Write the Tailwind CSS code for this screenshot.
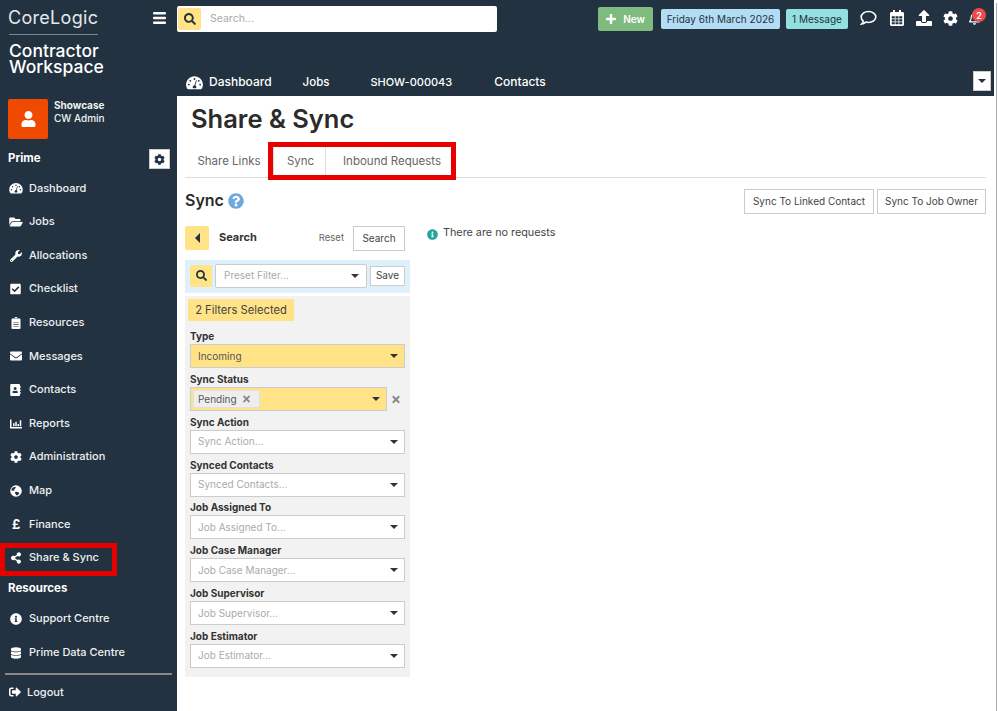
<!DOCTYPE html>
<html lang="en">
<head>
<meta charset="utf-8">
<title>Share &amp; Sync</title>
<script src="https://cdn.jsdelivr.net/npm/@tailwindcss/browser@4"></script>
</head>
<body class="m-0 bg-white font-['Inter','Liberation_Sans',sans-serif] text-[#333]">
<svg class="hidden" xmlns="http://www.w3.org/2000/svg">
<symbol id="search" viewBox="0 0 512 512"><path d="M505 442.7L405.3 343c-4.5-4.5-10.6-7-17-7H372c27.6-35.3 44-79.7 44-128C416 93.1 322.9 0 208 0S0 93.1 0 208s93.1 208 208 208c48.3 0 92.7-16.4 128-44v16.3c0 6.4 2.5 12.5 7 17l99.7 99.7c9.4 9.4 24.6 9.4 33.9 0l28.3-28.3c9.4-9.4 9.4-24.6.1-34zM208 336c-70.7 0-128-57.2-128-128 0-70.7 57.2-128 128-128 70.7 0 128 57.2 128 128 0 70.7-57.2 128-128 128z"/></symbol>
<symbol id="user" viewBox="0 0 448 512"><path d="M224 256c70.7 0 128-57.3 128-128S294.7 0 224 0 96 57.3 96 128s57.3 128 128 128zm89.6 32h-16.7c-22.2 10.2-46.9 16-72.9 16s-50.6-5.8-72.9-16h-16.7C60.2 288 0 348.2 0 422.4V464c0 26.5 21.5 48 48 48h352c26.5 0 48-21.5 48-48v-41.6c0-74.2-60.2-134.4-134.4-134.4z"/></symbol>
<symbol id="cog" viewBox="0 0 512 512"><path d="M487.4 315.7l-42.6-24.6c4.3-23.2 4.3-47 0-70.2l42.6-24.6c4.9-2.8 7.1-8.6 5.5-14-11.1-35.6-30-67.8-54.7-94.6-3.8-4.1-10-5.1-14.8-2.3L380.8 110c-17.9-15.4-38.5-27.3-60.8-35.1V25.8c0-5.6-3.9-10.5-9.4-11.7-36.7-8.2-74.3-7.8-109.2 0-5.5 1.2-9.4 6.1-9.4 11.7V75c-22.2 7.9-42.8 19.8-60.8 35.1L88.7 85.5c-4.9-2.8-11-1.9-14.8 2.3-24.7 26.7-43.6 58.9-54.7 94.6-1.7 5.4.6 11.2 5.5 14L67.3 221c-4.3 23.2-4.3 47 0 70.2l-42.6 24.6c-4.9 2.8-7.1 8.6-5.5 14 11.1 35.6 30 67.8 54.7 94.6 3.8 4.1 10 5.1 14.8 2.3l42.6-24.6c17.9 15.4 38.5 27.3 60.8 35.1v49.2c0 5.6 3.9 10.5 9.4 11.7 36.7 8.2 74.3 7.8 109.2 0 5.5-1.2 9.4-6.1 9.4-11.7v-49.2c22.2-7.9 42.8-19.8 60.8-35.1l42.6 24.6c4.9 2.8 11 1.9 14.8-2.3 24.7-26.7 43.6-58.9 54.7-94.6 1.5-5.5-.7-11.3-5.6-14.1zM256 336c-44.1 0-80-35.9-80-80s35.9-80 80-80 80 35.9 80 80-35.9 80-80 80z"/></symbol>
<symbol id="wrench" viewBox="0 0 512 512"><path d="M507.73 109.1c-2.24-9.03-13.54-12.09-20.12-5.51l-74.36 74.36-67.88-11.31-11.31-67.88 74.36-74.36c6.62-6.62 3.43-17.9-5.66-20.16-47.38-11.74-99.55.91-136.58 37.93-39.64 39.64-50.55 97.1-34.05 147.2L18.74 402.76c-24.99 24.99-24.99 65.51 0 90.5 24.99 24.99 65.51 24.99 90.5 0l213.21-213.21c50.12 16.71 107.47 5.68 147.37-34.22 37.07-37.07 49.7-89.32 37.91-136.73zM64 472c-13.25 0-24-10.75-24-24 0-13.26 10.75-24 24-24s24 10.74 24 24c0 13.25-10.75 24-24 24z"/></symbol>
<symbol id="check" viewBox="0 0 448 512"><path d="M400 480H48c-26.51 0-48-21.49-48-48V80c0-26.51 21.49-48 48-48h352c26.51 0 48 21.49 48 48v352c0 26.51-21.49 48-48 48zm-204.686-98.059l184-184c6.248-6.248 6.248-16.379 0-22.627l-22.627-22.627c-6.248-6.248-16.379-6.249-22.628 0L184 302.745l-70.059-70.059c-6.248-6.248-16.379-6.248-22.628 0l-22.627 22.627c-6.248 6.248-6.248 16.379 0 22.627l104 104c6.249 6.25 16.379 6.25 22.628.001z"/></symbol>
<symbol id="envelope" viewBox="0 0 512 512"><path d="M502.3 190.8c3.9-3.1 9.7-.2 9.7 4.7V400c0 26.5-21.5 48-48 48H48c-26.5 0-48-21.5-48-48V195.6c0-5 5.7-7.8 9.7-4.7 22.4 17.4 52.1 39.5 154.1 113.6 21.1 15.4 56.7 47.8 92.2 47.6 35.7.3 72-32.8 92.3-47.6 102-74.1 131.6-96.3 154-113.7zM256 320c23.2.4 56.6-29.2 73.4-41.4 132.7-96.3 142.8-104.7 173.4-128.7 5.8-4.5 9.2-11.5 9.2-18.9v-19c0-26.5-21.5-48-48-48H48C21.5 64 0 85.5 0 112v19c0 7.4 3.4 14.3 9.2 18.9 30.6 23.9 40.7 32.4 173.4 128.7 16.8 12.2 50.2 41.8 73.4 41.4z"/></symbol>
<symbol id="info" viewBox="0 0 512 512"><path d="M256 8C119.043 8 8 119.083 8 256c0 136.997 111.043 248 248 248s248-111.003 248-248C504 119.083 392.957 8 256 8zm0 110c23.196 0 42 18.804 42 42s-18.804 42-42 42-42-18.804-42-42 18.804-42 42-42zm56 254c0 6.627-5.373 12-12 12h-88c-6.627 0-12-5.373-12-12v-24c0-6.627 5.373-12 12-12h12v-64h-12c-6.627 0-12-5.373-12-12v-24c0-6.627 5.373-12 12-12h64c6.627 0 12 5.373 12 12v100h12c6.627 0 12 5.373 12 12v24z"/></symbol>
<symbol id="share" viewBox="0 0 448 512"><path d="M352 320c-22.608 0-43.387 7.819-59.79 20.895l-102.486-64.054a96.551 96.551 0 0 0 0-41.683l102.486-64.054C308.613 184.181 329.392 192 352 192c53.019 0 96-42.981 96-96S405.019 0 352 0s-96 42.981-96 96c0 7.158.79 14.13 2.276 20.841L155.79 180.895C139.387 167.819 118.608 160 96 160c-53.019 0-96 42.981-96 96s42.981 96 96 96c22.608 0 43.387-7.819 59.79-20.895l102.486 64.054A96.301 96.301 0 0 0 256 416c0 53.019 42.981 96 96 96s96-42.981 96-96-42.981-96-96-96z"/></symbol>
<symbol id="gauge" viewBox="0 0 576 512"><path fill-rule="evenodd" d="M288 40C129 40 0 169 0 328c0 53 14 102 39 145 6 10 17 15 28 15h442c11 0 22-5 28-15 25-43 39-92 39-145C576 169 447 40 288 40zM288 104a32 32 0 1 1 0 64 32 32 0 0 1 0-64zM96 360a32 32 0 1 1 0-64 32 32 0 0 1 0 64zM144 232a32 32 0 1 1 0-64 32 32 0 0 1 0 64zM480 360a32 32 0 1 1 0-64 32 32 0 0 1 0 64zM432 232a32 32 0 1 1 0-64 32 32 0 0 1 0 64zM362 206l-46 146c20 12 34 33 34 58 0 16-6 31-15 42h-94c-9-11-15-26-15-42 0-35 28-63 63-64l45-152c3-10 13-15 22-12s9 14 6 24z"/></symbol>
<symbol id="folder" viewBox="0 0 576 512"><path d="M572.700 292.100L500.300 416.200A64 64 0 0 1 445 448H45c-18.500 0-30.100-20.100-20.700-36.100l72.400-124.200A64 64 0 0 1 152 256h400c18.500 0 30.100 20.100 20.700 36.100zM152 224h328v-48c0-26.500-21.500-48-48-48H272l-64-64H48C21.500 64 0 85.500 0 112v278l69.100-118.400C86.200 242.300 118 224 152 224z"/></symbol>
<symbol id="clipboard" viewBox="0 0 384 512"><path fill-rule="evenodd" d="M336 64h-80c0-35.300-28.700-64-64-64s-64 28.700-64 64H48C21.500 64 0 85.500 0 112v352c0 26.500 21.500 48 48 48h288c26.500 0 48-21.500 48-48V112c0-26.500-21.500-48-48-48zM192 40a24 24 0 1 1 0 48 24 24 0 0 1 0-48zM80 220h224v28H80zM80 300h224v28H80zM80 380h224v28H80z"/></symbol>
<symbol id="book" viewBox="0 0 448 512"><path fill-rule="evenodd" d="M436 160c6.600 0 12-5.400 12-12v-40c0-6.600-5.400-12-12-12h-20V48c0-26.500-21.500-48-48-48H48C21.500 0 0 21.500 0 48v416c0 26.500 21.500 48 48 48h320c26.500 0 48-21.500 48-48v-48h20c6.600 0 12-5.400 12-12v-40c0-6.600-5.400-12-12-12h-20v-64h20c6.600 0 12-5.400 12-12v-40c0-6.600-5.400-12-12-12h-20v-64h20zM208 128a64 64 0 1 1 0 128 64 64 0 0 1 0-128zm112 236.800c0 10.600-10 19.200-22.400 19.200H118.400C106 384 96 375.400 96 364.800v-19.200c0-31.800 30.100-57.600 67.200-57.600h5c12.300 5.100 25.700 8 39.800 8s27.600-2.900 39.800-8h5c37.100 0 67.200 25.800 67.200 57.600v19.200z"/></symbol>
<symbol id="chart" viewBox="0 0 512 512"><path d="M496 384H64V80c0-8.840-7.160-16-16-16H16C7.160 64 0 71.160 0 80v336c0 17.670 14.330 32 32 32h464c8.840 0 16-7.160 16-16v-32c0-8.840-7.160-16-16-16zM144 352h32c8.800 0 16-7.200 16-16v-96c0-8.800-7.200-16-16-16h-32c-8.800 0-16 7.200-16 16v96c0 8.800 7.200 16 16 16zm96 0h32c8.800 0 16-7.200 16-16V176c0-8.800-7.200-16-16-16h-32c-8.800 0-16 7.200-16 16v160c0 8.800 7.200 16 16 16zm96 0h32c8.800 0 16-7.200 16-16v-64c0-8.800-7.200-16-16-16h-32c-8.800 0-16 7.200-16 16v64c0 8.800 7.200 16 16 16zm96 0h32c8.800 0 16-7.200 16-16V112c0-8.800-7.200-16-16-16h-32c-8.800 0-16 7.200-16 16v224c0 8.800 7.200 16 16 16z"/></symbol>
<symbol id="globe" viewBox="0 0 512 512"><path fill-rule="evenodd" d="M256 8a248 248 0 1 0 0 496 248 248 0 0 0 0-496zM120 110c40-10 70-30 110-20 30 8 20 50-10 60-30 12-40 30-30 60 8 26-30 40-60 30-30-10-60-10-70 0 0-50 20-100 60-130zM300 440c-30 10-50-10-50-40 0-30-40-30-40-70 0-30 40-50 80-40 40 10 80 20 100 50 14 30-40 90-90 100z"/></symbol>
<symbol id="db" viewBox="0 0 448 512"><path d="M448 73.100v45.700C448 159.100 347.700 192 224 192S0 159.100 0 118.900V73.100C0 32.900 100.300 0 224 0s224 32.900 224 73.100zM448 176v102.900C448 319.100 347.700 352 224 352S0 319.100 0 278.900V176c48.100 33.100 136.200 48.600 224 48.600S399.900 209.100 448 176zm0 160v102.900C448 479.100 347.700 512 224 512S0 479.100 0 438.900V336c48.100 33.100 136.200 48.600 224 48.600S399.900 369.100 448 336z"/></symbol>
<symbol id="signout" viewBox="0 0 512 512"><path d="M497 273L329 441c-15 15-41 4.500-41-17v-96H152c-13.300 0-24-10.700-24-24v-96c0-13.300 10.700-24 24-24h136V88c0-21.400 25.900-32 41-17l168 168c9.300 9.400 9.300 24.600 0 34zM192 436v-40c0-6.600-5.400-12-12-12H96c-17.700 0-32-14.300-32-32V160c0-17.700 14.300-32 32-32h84c6.600 0 12-5.400 12-12V76c0-6.600-5.400-12-12-12H96c-53 0-96 43-96 96v192c0 53 43 96 96 96h84c6.600 0 12-5.400 12-12z"/></symbol>
<symbol id="calendar" viewBox="0 0 448 512"><path fill-rule="evenodd" d="M400 64h-48V12c0-6.600-5.400-12-12-12h-40c-6.600 0-12 5.400-12 12v52H160V12c0-6.600-5.400-12-12-12h-40c-6.600 0-12 5.400-12 12v52H48C21.500 64 0 85.500 0 112v352c0 26.500 21.500 48 48 48h352c26.500 0 48-21.500 48-48V112c0-26.500-21.500-48-48-48zM56 200h96v72H56zM176 200h96v72h-96zM296 200h96v72h-96zM56 296h96v72H56zM176 296h96v72h-96zM296 296h96v72h-96zM56 392h96v64H56zM176 392h96v64h-96zM296 392h96v64h-96z"/></symbol>
<symbol id="upload" viewBox="0 0 512 512"><path d="M296 384h-80c-13.300 0-24-10.700-24-24V192h-87.700c-17.800 0-26.700-21.500-14.100-34.100L242.300 5.700c7.500-7.500 19.800-7.500 27.300 0l152.200 152.200c12.600 12.600 3.700 34.100-14.100 34.100H320v168c0 13.300-10.700 24-24 24zm216-8v112c0 13.300-10.700 24-24 24H24c-13.300 0-24-10.700-24-24V376c0-13.300 10.700-24 24-24h136v8c0 30.900 25.100 56 56 56h80c30.900 0 56-25.100 56-56v-8h136c13.300 0 24 10.700 24 24z"/></symbol>
<symbol id="bell" viewBox="0 0 448 512"><path fill-rule="evenodd" d="M224 512c35.300 0 64-28.700 64-64H160c0 35.300 28.700 64 64 64zM439.400 362.300c-19.300-20.800-55.500-52-55.500-154.300 0-77.700-54.500-139.900-127.900-155.200V32c0-17.700-14.300-32-32-32s-32 14.300-32 32v20.800C118.600 68.100 64.100 130.300 64.100 208c0 102.300-36.200 133.500-55.500 154.300-6 6.400-8.700 14.100-8.600 21.700.1 16.400 13 32 32.100 32h383.800c19.100 0 32-15.600 32.100-32 .1-7.600-2.600-15.300-8.600-21.700zM64 368c21-27 48-70 48-160 0-62 50-112 112-112s112 50 112 112c0 90 27 133 48 160z"/></symbol>
<symbol id="question" viewBox="0 0 512 512"><path d="M504 256c0 137-111 248-248 248S8 393 8 256C8 119.100 119 8 256 8s248 111 248 248zM262.700 90c-54.500 0-89.300 23-116.600 63.800-3.500 5.300-2.400 12.400 2.700 16.300l34.700 26.300c5.200 3.900 12.600 3 16.700-2.100 17.900-22.700 30.100-35.800 57.300-35.800 20.400 0 45.700 13.100 45.700 33 0 15-12.400 22.700-32.600 34-23.600 13.200-54.800 29.700-54.800 70.900V300c0 6.600 5.400 12 12 12h56c6.600 0 12-5.400 12-12v-1.300c0-28.600 83.400-29.800 83.400-107.200C379.200 133.300 318.800 90 262.700 90zM256 339c-25.400 0-46 20.600-46 46 0 25.400 20.600 46 46 46s46-20.600 46-46c0-25.400-20.600-46-46-46z"/></symbol>
<symbol id="times" viewBox="0 0 352 512"><path d="M242.720 256l100.070-100.070c12.280-12.280 12.280-32.190 0-44.480l-22.240-22.240c-12.280-12.280-32.190-12.280-44.480 0L176 189.280 75.930 89.210c-12.280-12.280-32.190-12.280-44.480 0L9.210 111.450c-12.280 12.280-12.280 32.190 0 44.480L109.280 256 9.210 356.070c-12.280 12.280-12.280 32.190 0 44.480l22.240 22.240c12.280 12.280 32.200 12.280 44.480 0L176 322.720l100.070 100.070c12.280 12.280 32.200 12.280 44.480 0l22.240-22.240c12.280-12.280 12.280-32.190 0-44.480L242.720 256z"/></symbol>
</svg>

<div class="relative flex h-[711px] w-[998px] overflow-hidden">
  <!-- sidebar -->
  <aside class="flex h-full w-[177px] shrink-0 flex-col bg-[#223240] text-white">
    <div class="flex h-[99px] justify-between pl-[8px] pr-[11px]">
      <div class="w-[100px]">
        <div class="mt-[8px] h-[20px] whitespace-nowrap text-[18px] leading-[20px] tracking-[0.3px] text-[#e6e9eb]">CoreLogic</div>
        <div class="ml-[1px] mt-[6px] h-[1px] w-[89px] bg-[#7b8790]"></div>
        <div class="ml-[1px] mt-[8px] whitespace-nowrap text-[17.500px] font-medium leading-[16px]">Contractor<br>Workspace</div>
      </div>
      <svg class="mt-[12px] h-[12px] w-[13px]" viewBox="0 0 13 12" fill="#fff"><rect width="13" height="2.500" y="0" rx="1"/><rect width="13" height="2.500" y="4.700" rx="1"/><rect width="13" height="2.500" y="9.400" rx="1"/></svg>
    </div>
    <div class="flex h-[40px] items-stretch pl-[8px]">
      <div class="flex h-[40px] w-[40px] items-center justify-center rounded-[2px] bg-[#f04a00]">
        <svg class="h-[16px] w-[15px]" fill="#fff"><use href="#user"/></svg>
      </div>
      <div class="ml-[6px] text-[10px] leading-[13px] text-[#f0f2f3]">
        <div class="font-bold">Showcase</div>
        <div class="font-medium">CW Admin</div>
      </div>
    </div>
    <div class="mt-[10px] flex h-[20px] items-center justify-between pl-[8px] pr-[7px]">
      <span class="text-[11.500px] font-bold">Prime</span>
      <span class="flex h-[20px] w-[21px] items-center justify-center border border-[#ccc] bg-white"><svg class="h-[11px] w-[11px]" fill="#223240"><use href="#cog"/></svg></span>
    </div>
    <nav class="mt-[2.600px] flex flex-col text-[11px] font-medium text-[#eef0f2]">
      <a class="flex h-[33.600px] items-center pl-[9px]"><svg class="h-[12px] w-[14px]" fill="#fff"><use href="#gauge"/></svg><span class="ml-[6px] -mt-[1px]">Dashboard</span></a>
      <a class="flex h-[33.600px] items-center pl-[9px]"><svg class="h-[12px] w-[14px]" fill="#fff"><use href="#folder"/></svg><span class="ml-[6px] -mt-[1px]">Jobs</span></a>
      <a class="flex h-[33.600px] items-center pl-[10px]"><svg class="h-[12px] w-[12px]" fill="#fff"><use href="#wrench"/></svg><span class="ml-[7px] -mt-[1px]">Allocations</span></a>
      <a class="flex h-[33.600px] items-center pl-[10px]"><svg class="h-[12px] w-[11px]" fill="#fff"><use href="#check"/></svg><span class="ml-[8px] -mt-[1px]">Checklist</span></a>
      <a class="flex h-[33.600px] items-center pl-[11px]"><svg class="h-[12px] w-[10px]" fill="#fff"><use href="#clipboard"/></svg><span class="ml-[8px] -mt-[1px]">Resources</span></a>
      <a class="flex h-[33.600px] items-center pl-[10px]"><svg class="h-[12px] w-[12px]" fill="#fff"><use href="#envelope"/></svg><span class="ml-[7px] -mt-[1px]">Messages</span></a>
      <a class="flex h-[33.600px] items-center pl-[10px]"><svg class="h-[12px] w-[11px]" fill="#fff"><use href="#book"/></svg><span class="ml-[8px] -mt-[1px]">Contacts</span></a>
      <a class="flex h-[33.600px] items-center pl-[10px]"><svg class="h-[12px] w-[12px]" fill="#fff"><use href="#chart"/></svg><span class="ml-[7px] -mt-[1px]">Reports</span></a>
      <a class="flex h-[33.600px] items-center pl-[10px]"><svg class="h-[12px] w-[12px]" fill="#fff"><use href="#cog"/></svg><span class="ml-[7px] -mt-[1px]">Administration</span></a>
      <a class="flex h-[33.600px] items-center pl-[10px]"><svg class="h-[12px] w-[12px]" fill="#fff"><use href="#globe"/></svg><span class="ml-[7px] -mt-[1px]">Map</span></a>
      <a class="flex h-[33.600px] items-center pl-[12px]"><span class="w-[9px] text-[13px] font-bold leading-none text-white">£</span><span class="ml-[8px] -mt-[1px]">Finance</span></a>
      <a class="flex h-[33.600px] items-center pl-[11px]"><svg class="h-[12px] w-[10px]" fill="#fff"><use href="#share"/></svg><span class="ml-[8px] -mt-[1px]">Share &amp; Sync</span></a>
      <div class="flex h-[27.500px] items-center pl-[8px] text-[11.500px] font-bold text-white">Resources</div>
      <a class="flex h-[33.600px] items-center pl-[10px]"><svg class="h-[12px] w-[12px]" fill="#fff"><use href="#info"/></svg><span class="ml-[7px] -mt-[1px]">Support Centre</span></a>
      <a class="flex h-[33.600px] items-center pl-[11px]"><svg class="h-[12px] w-[10px]" fill="#fff"><use href="#db"/></svg><span class="ml-[8px] -mt-[1px]">Prime Data Centre</span></a>
    </nav>
    <div class="ml-[5px] mt-[4px] h-[2px] w-[167px] bg-[#888]"></div>
    <a class="mt-[5px] flex h-[24px] items-center pl-[9px] text-[11px] font-medium text-[#eef0f2]"><svg class="h-[12px] w-[12px]" fill="#fff"><use href="#signout"/></svg><span class="ml-[6px] -mt-[1px]">Logout</span></a>
  </aside>

  <!-- main -->
  <div class="flex min-w-0 flex-1 flex-col">
    <header class="flex h-[96px] shrink-0 flex-col bg-[#223240] text-white">
      <div class="flex h-[40px] items-start">
        <div class="mt-[6px] flex h-[26px] w-[320px] items-center rounded-[2px] bg-white pl-[1px]">
          <span class="flex h-[22px] w-[23px] items-center justify-center rounded-[2px] bg-[#ffe386]"><svg class="h-[12px] w-[12px]" fill="#223240"><use href="#search"/></svg></span>
          <span class="ml-[9px] text-[10.500px] text-[#aaa]">Search...</span>
        </div>
        <button class="ml-[101px] mt-[7px] flex h-[24px] w-[55px] items-center justify-center gap-[7px] rounded-[2px] bg-[#7fbb7f] text-[10px] font-semibold text-white">
          <svg class="h-[10px] w-[10px]" viewBox="0 0 10 10" fill="#fff"><rect x="3.800" width="2.400" height="10" rx=".6"/><rect y="3.800" width="10" height="2.400" rx=".6"/></svg>New
        </button>
        <span class="ml-[8px] mt-[9px] flex h-[20px] w-[119px] items-center justify-center rounded-[2px] bg-[#b3dcf5] text-[10px] text-[#223240]">Friday 6th March 2026</span>
        <span class="ml-[6px] mt-[9px] flex h-[20px] w-[62px] items-center justify-center rounded-[2px] bg-[#94e0e0] text-[10px] text-[#223240]">1 Message</span>
        <svg class="ml-[12px] mt-[10px] h-[16px] w-[17px]" viewBox="0 0 17 16" fill="none" stroke="#fff" stroke-width="1.600"><path d="M8.500 1.500c4 0 7.300 2.400 7.300 5.500s-3.300 5.500-7.300 5.500c-1 0-1.900-.1-2.800-.4-1 .9-2.400 1.700-4 1.900.8-.8 1.400-1.900 1.500-3C1.900 10.300 1.200 8.700 1.200 7c0-3.100 3.300-5.500 7.300-5.500z"/></svg>
        <svg class="ml-[13px] mt-[10px] h-[16px] w-[14px]" fill="#fff"><use href="#calendar"/></svg>
        <svg class="ml-[12px] mt-[10px] h-[16px] w-[16px]" fill="#fff"><use href="#upload"/></svg>
        <svg class="ml-[11px] mt-[11px] h-[15px] w-[15px]" fill="#fff"><use href="#cog"/></svg>
        <span class="relative ml-[11px] mt-[11px] h-[15px] w-[11px]">
          <svg class="h-[15px] w-[11px]" fill="#fff"><use href="#bell"/></svg>
          <span class="absolute left-[3px] top-[-3px] flex h-[14px] w-[14px] items-center justify-center rounded-full bg-[#f04b4b] text-[9px] font-semibold leading-none text-white">2</span>
        </span>
      </div>
      <div class="flex h-[56px] items-end pb-[4px] text-[11.500px] font-medium">
        <span class="flex h-[20px] items-center pl-[9px]"><svg class="h-[15px] w-[17px]" fill="#fff"><use href="#gauge"/></svg><span class="ml-[6px] text-[12px]">Dashboard</span></span>
        <span class="mb-[-1px] ml-[31px] flex h-[20px] items-center">Jobs</span>
        <span class="ml-[41px] flex h-[20px] items-center text-[11px]">SHOW-000043</span>
        <span class="ml-[42px] flex h-[20px] items-center text-[12px]">Contacts</span>
        <span class="ml-auto mb-[1px] mr-[3px] flex h-[20px] w-[18px] items-center justify-center border border-[#ccc] bg-white"><span class="h-0 w-0 border-x-[4px] border-t-[4px] border-x-transparent border-t-[#223240]"></span></span>
      </div>
    </header>

    <main class="relative min-h-0 flex-1 bg-white px-[8px] text-[#333]">
      <h1 class="ml-[6px] mt-[8px] h-[30px] text-[25.500px] font-semibold leading-[30px] text-[#2b2b2b]">Share &amp; Sync</h1>
      <div class="mt-[12px] flex h-[32px] items-stretch border-b border-[#ddd] text-[11.500px] text-[#666]">
        <span class="flex w-[88px] items-center justify-center">Share Links</span>
        <span class="flex w-[53px] items-center justify-center border-x border-[#ddd] pl-[2px]">Sync</span>
        <span class="flex w-[132px] items-center justify-center">Inbound Requests</span>
      </div>
      <div class="mt-[11px] flex h-[26px] items-start justify-between">
        <div class="flex items-center gap-[4px]">
          <span class="-mt-[1px] text-[16px] font-semibold leading-[24px] text-[#2b2b2b]">Sync</span>
          <svg class="h-[16px] w-[16px]" fill="#6fa8dc"><use href="#question"/></svg>
        </div>
        <div class="flex gap-[3px] text-[10px] text-[#444]">
          <button class="h-[25px] w-[130px] border border-[#ccc] bg-white">Sync To Linked Contact</button>
          <button class="h-[25px] w-[109px] border border-[#ccc] bg-white">Sync To Job Owner</button>
        </div>
      </div>

      <div class="mt-[10px] flex items-start">
        <section class="w-[225px]">
          <div class="flex h-[26px] items-center">
            <span class="flex h-[24px] w-[24px] items-center justify-center rounded-[2px] bg-[#ffe386]"><span class="h-0 w-0 border-y-[5px] border-r-[5px] border-y-transparent border-r-[#223240]"></span></span>
            <span class="ml-[10px] -mt-[1px] text-[11px] font-bold text-[#333]">Search</span>
            <span class="ml-auto text-[9.500px] text-[#666]">Reset</span>
            <button class="ml-[9px] mr-[5px] h-[25px] w-[52px] border border-[#ccc] bg-white text-[10px] text-[#444]">Search</button>
          </div>
          <div class="mt-[9px] flex h-[33px] items-center bg-[#def1fb] pb-[2px] pl-[5px]">
            <span class="flex h-[22px] w-[22px] items-center justify-center rounded-[2px] bg-[#ffe386]"><svg class="h-[11px] w-[11px]" fill="#223240"><use href="#search"/></svg></span>
            <span class="relative ml-[3px] flex h-[24px] w-[152px] items-center rounded-[2px] border border-[#ccc] bg-white pl-[8px] text-[10px] text-[#aaa]">Preset Filter...<span class="absolute right-[7px] top-[9px] h-0 w-0 border-x-[4px] border-t-[4px] border-x-transparent border-t-[#333]"></span></span>
            <button class="ml-[3px] h-[20px] w-[35px] border border-[#ccc] bg-white text-[10px] text-[#444]">Save</button>
          </div>
          <div class="mt-[3px] flex h-[381px] flex-col bg-[#f2f2f2] pl-[3px] pt-[3px]">
            <div class="flex h-[22px] w-[106px] items-center justify-center rounded-[1px] bg-[#ffe386] text-[11.200px] text-[#444]">2 Filters Selected</div>
            <div class="mt-[5.300px] flex flex-col gap-[0.800px] pl-[2px] pr-[5px]">
              <div>
                <div class="h-[18px] text-[10px] font-bold leading-[20px] text-[#333]">Type</div>
                <div class="relative flex h-[24px] items-center border border-[#ccc] bg-[#ffe386] pl-[7px] text-[10px] text-[#555]">Incoming<span class="absolute right-[6px] top-[9px] h-0 w-0 border-x-[4px] border-t-[4px] border-x-transparent border-t-[#333]"></span></div>
              </div>
              <div>
                <div class="h-[18px] text-[10px] font-bold leading-[20px] text-[#333]">Sync Status</div>
                <div class="flex h-[24px] items-center">
                  <div class="relative flex h-[24px] flex-1 items-center border border-[#ccc] bg-[#ffe386] pl-[2px] text-[10px] text-[#555]">
                    <span class="flex h-[18px] w-[67px] items-center gap-[6px] rounded-[1px] border border-[#e0e0e0] bg-[#eee] pl-[4px]">Pending<svg class="h-[10px] w-[7px]" fill="#888"><use href="#times"/></svg></span>
                    <span class="absolute right-[6px] top-[9px] h-0 w-0 border-x-[4px] border-t-[4px] border-x-transparent border-t-[#333]"></span>
                  </div>
                  <span class="flex h-[24px] w-[18px] items-center justify-center"><svg class="h-[11px] w-[8px]" fill="#888"><use href="#times"/></svg></span>
                </div>
              </div>
              <div>
                <div class="h-[18px] text-[10px] font-bold leading-[20px] text-[#333]">Sync Action</div>
                <div class="relative flex h-[24px] items-center border border-[#ccc] bg-white pl-[7px] text-[10px] text-[#aaa]">Sync Action...<span class="absolute right-[6px] top-[9px] h-0 w-0 border-x-[4px] border-t-[4px] border-x-transparent border-t-[#333]"></span></div>
              </div>
              <div>
                <div class="h-[18px] text-[10px] font-bold leading-[20px] text-[#333]">Synced Contacts</div>
                <div class="relative flex h-[24px] items-center border border-[#ccc] bg-white pl-[7px] text-[10px] text-[#aaa]">Synced Contacts...<span class="absolute right-[6px] top-[9px] h-0 w-0 border-x-[4px] border-t-[4px] border-x-transparent border-t-[#333]"></span></div>
              </div>
              <div>
                <div class="h-[18px] text-[10px] font-bold leading-[20px] text-[#333]">Job Assigned To</div>
                <div class="relative flex h-[24px] items-center border border-[#ccc] bg-white pl-[7px] text-[10px] text-[#aaa]">Job Assigned To...<span class="absolute right-[6px] top-[9px] h-0 w-0 border-x-[4px] border-t-[4px] border-x-transparent border-t-[#333]"></span></div>
              </div>
              <div>
                <div class="h-[18px] text-[10px] font-bold leading-[20px] text-[#333]">Job Case Manager</div>
                <div class="relative flex h-[24px] items-center border border-[#ccc] bg-white pl-[7px] text-[10px] text-[#aaa]">Job Case Manager...<span class="absolute right-[6px] top-[9px] h-0 w-0 border-x-[4px] border-t-[4px] border-x-transparent border-t-[#333]"></span></div>
              </div>
              <div>
                <div class="h-[18px] text-[10px] font-bold leading-[20px] text-[#333]">Job Supervisor</div>
                <div class="relative flex h-[24px] items-center border border-[#ccc] bg-white pl-[7px] text-[10px] text-[#aaa]">Job Supervisor...<span class="absolute right-[6px] top-[9px] h-0 w-0 border-x-[4px] border-t-[4px] border-x-transparent border-t-[#333]"></span></div>
              </div>
              <div>
                <div class="h-[18px] text-[10px] font-bold leading-[20px] text-[#333]">Job Estimator</div>
                <div class="relative flex h-[24px] items-center border border-[#ccc] bg-white pl-[7px] text-[10px] text-[#aaa]">Job Estimator...<span class="absolute right-[6px] top-[9px] h-0 w-0 border-x-[4px] border-t-[4px] border-x-transparent border-t-[#333]"></span></div>
              </div>
            </div>
          </div>
        </section>
        <div class="ml-[17px] mt-[2px] flex items-center">
          <svg class="h-[11px] w-[11px]" fill="#26a69a"><use href="#info"/></svg>
          <span class="ml-[5px] -mt-[2px] text-[10.800px] text-[#444]">There are no requests</span>
        </div>
      </div>
    </main>
  </div>

  <!-- page scrollbar edge -->
  <div class="h-full w-[4px] shrink-0 bg-white pl-[2px] pt-[3px]"><div class="h-full w-[1px] bg-[#aaa]"></div></div>

  <!-- highlight overlays drawn over the screenshot -->
  <div class="pointer-events-none absolute left-0 top-[543px] h-[33px] w-[117px] border-[5px] border-[#e60000]"></div>
  <div class="pointer-events-none absolute left-[268px] top-[142px] h-[38px] w-[188px] border-[5px] border-[#e60000]"></div>
</div>
</body>
</html>
